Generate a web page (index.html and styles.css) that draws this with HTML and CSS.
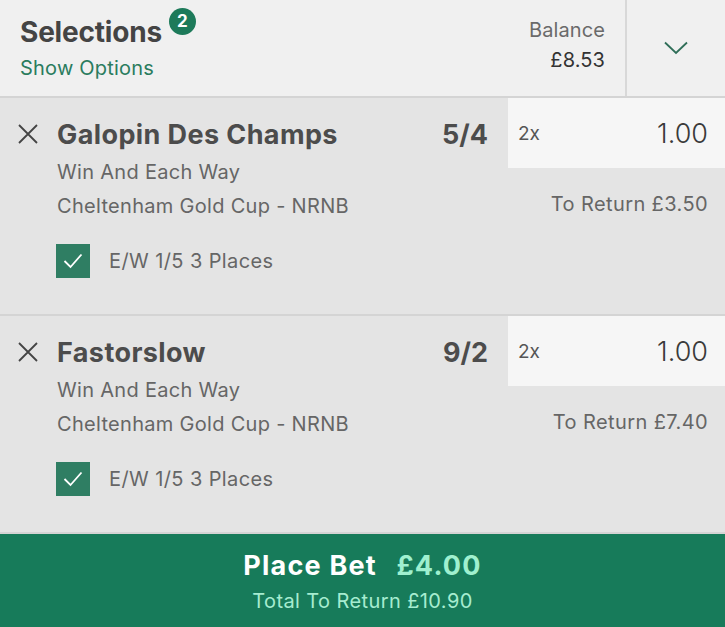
FILE: index.html
```html
<!DOCTYPE html>
<html lang="en">

<head>
    <meta charset="UTF-8">
    <title>Bet Slip</title>
    <link rel="stylesheet" href="styles.css">
</head>

<body>

    <div class="slip">
        <!-- header with balance + collapse toggle -->
        <div class="header">
            <div class="title-block">
                <div class="title">Selections<span class="badge">2</span></div>
                <div class="options">Show Options</div>
            </div>
            <div class="balance">
                <div class="balance-label">Balance</div>
                <div class="balance-value">£8.53</div>
            </div>
            <div class="toggle">
                <svg width="24" height="14" viewBox="0 0 24 14"><path d="M1 1.5 L12 12 L23 1.5" fill="none" stroke="#2f6e58" stroke-width="1.8"/></svg>
            </div>
        </div>

        <div class="bet">
            <div class="bet-main">
                <div class="bet-head">
                    <svg class="close" width="20" height="20" viewBox="0 0 20 20"><path d="M1 1 L19 19 M19 1 L1 19" stroke="#444" stroke-width="1.8"/></svg>
                    <div class="name">Galopin Des Champs</div>
                    <div class="odds">5/4</div>
                </div>
                <div class="info">Win And Each Way</div>
                <div class="info">Cheltenham Gold Cup - NRNB</div>
                <div class="ew">
                    <span class="check"><svg width="20" height="16" viewBox="0 0 20 16"><path d="M1.5 8 L7.5 14 L18.5 1.5" fill="none" stroke="#fff" stroke-width="1.8"/></svg></span>
                    E/W 1/5 3 Places
                </div>
            </div>
            <div class="bet-stake">
                <div class="stake-box"><span class="mult">2x</span><span class="stake">1.00</span></div>
                <div class="to-return">To Return £3.50</div>
            </div>
        </div>

        <div class="bet">
            <div class="bet-main">
                <div class="bet-head">
                    <svg class="close" width="20" height="20" viewBox="0 0 20 20"><path d="M1 1 L19 19 M19 1 L1 19" stroke="#444" stroke-width="1.8"/></svg>
                    <div class="name">Fastorslow</div>
                    <div class="odds">9/2</div>
                </div>
                <div class="info">Win And Each Way</div>
                <div class="info">Cheltenham Gold Cup - NRNB</div>
                <div class="ew">
                    <span class="check"><svg width="20" height="16" viewBox="0 0 20 16"><path d="M1.5 8 L7.5 14 L18.5 1.5" fill="none" stroke="#fff" stroke-width="1.8"/></svg></span>
                    E/W 1/5 3 Places
                </div>
            </div>
            <div class="bet-stake">
                <div class="stake-box"><span class="mult">2x</span><span class="stake">1.00</span></div>
                <div class="to-return">To Return £7.40</div>
            </div>
        </div>

        <div class="place">
            <div class="place-main">Place Bet <span class="place-amount">£4.00</span></div>
            <div class="place-sub">Total To Return £10.90</div>
        </div>
    </div>

</body>

</html>
```

FILE: styles.css
```css
body {
    margin: 0;
    font-family: Inter, "Liberation Sans", sans-serif;
    background: #e4e4e4;
}

.header {
    display: flex;
    height: 96px;
    background: #f0f0f0;
    border-bottom: 2px solid #d4d4d4;
}
.title-block {
    flex: 1;
    padding: 14px 0 0 20px;
}
.title {
    display: inline-block;
    position: relative;
    font-size: 28px;
    font-weight: 700;
    color: #444;
    line-height: 36px;
    letter-spacing: -0.2px;
}
.badge {
    position: absolute;
    left: 100%;
    top: -6px;
    width: 27px;
    height: 27px;
    margin-left: 7px;
    border-radius: 50%;
    background: #1d7a5a;
    color: #fff;
    font-size: 17px;
    line-height: 27px;
    text-align: center;
    letter-spacing: 0;
}
.options {
    margin-top: 4px;
    color: #2a7c5e;
    font-size: 20px;
    line-height: 28px;
    letter-spacing: 0.2px;
}
.balance {
    text-align: right;
    padding: 15px 20px 0 0;
    font-size: 20px;
    line-height: 30px;
    letter-spacing: 0.1px;
}
.balance-label {
    color: #6a6a6a;
}
.balance-value {
    color: #333;
}
.toggle {
    width: 98px;
    border-left: 2px solid #d8d8d8;
    display: flex;
    justify-content: center;
    align-items: center;
}

.bet {
    display: flex;
    height: 216px;
    background: #e4e4e4;
    border-bottom: 2px solid #d4d4d4;
}
.bet-main {
    flex: 1;
    padding: 15px 20px 0 18px;
}
.bet-head {
    display: flex;
    align-items: center;
    height: 42px;
}
.close {
    margin-right: 19px;
}
.name {
    flex: 1;
    font-size: 27px;
    font-weight: 700;
    color: #4c4c4c;
    letter-spacing: 0.4px;
}
.odds {
    font-size: 27px;
    font-weight: 700;
    color: #4c4c4c;
}
.info {
    margin-left: 39px;
    font-size: 20px;
    line-height: 34px;
    color: #666;
    letter-spacing: 0.3px;
}
.ew {
    display: flex;
    align-items: center;
    margin: 21px 0 0 38px;
    font-size: 20px;
    color: #666;
    letter-spacing: 0.4px;
}
.check {
    width: 34px;
    height: 34px;
    background: #2f7e63;
    display: flex;
    justify-content: center;
    align-items: center;
    margin-right: 19px;
}

.bet-stake {
    width: 217px;
}
.stake-box {
    height: 70px;
    background: #f6f6f6;
    display: flex;
    align-items: center;
    justify-content: space-between;
    padding: 0 17px 0 10px;
}
.mult {
    font-size: 19px;
    color: #555;
}
.stake {
    font-size: 27px;
    font-weight: 300;
    color: #3a3a3a;
}
.to-return {
    text-align: right;
    padding: 24px 17px 0 0;
    font-size: 20px;
    line-height: 24px;
    color: #666;
    letter-spacing: 0.4px;
}

.place {
    height: 93px;
    background: #177b5a;
    text-align: center;
    padding-top: 14px;
    box-sizing: border-box;
}
.place-main {
    color: #fff;
    font-size: 27px;
    font-weight: 700;
    line-height: 36px;
    letter-spacing: 1.2px;
}
.place-amount {
    color: #9ff0cf;
    margin-left: 12px;
}
.place-sub {
    margin-top: 2px;
    color: #a6ecd0;
    font-size: 20px;
    line-height: 30px;
    letter-spacing: 0.4px;
}
```
